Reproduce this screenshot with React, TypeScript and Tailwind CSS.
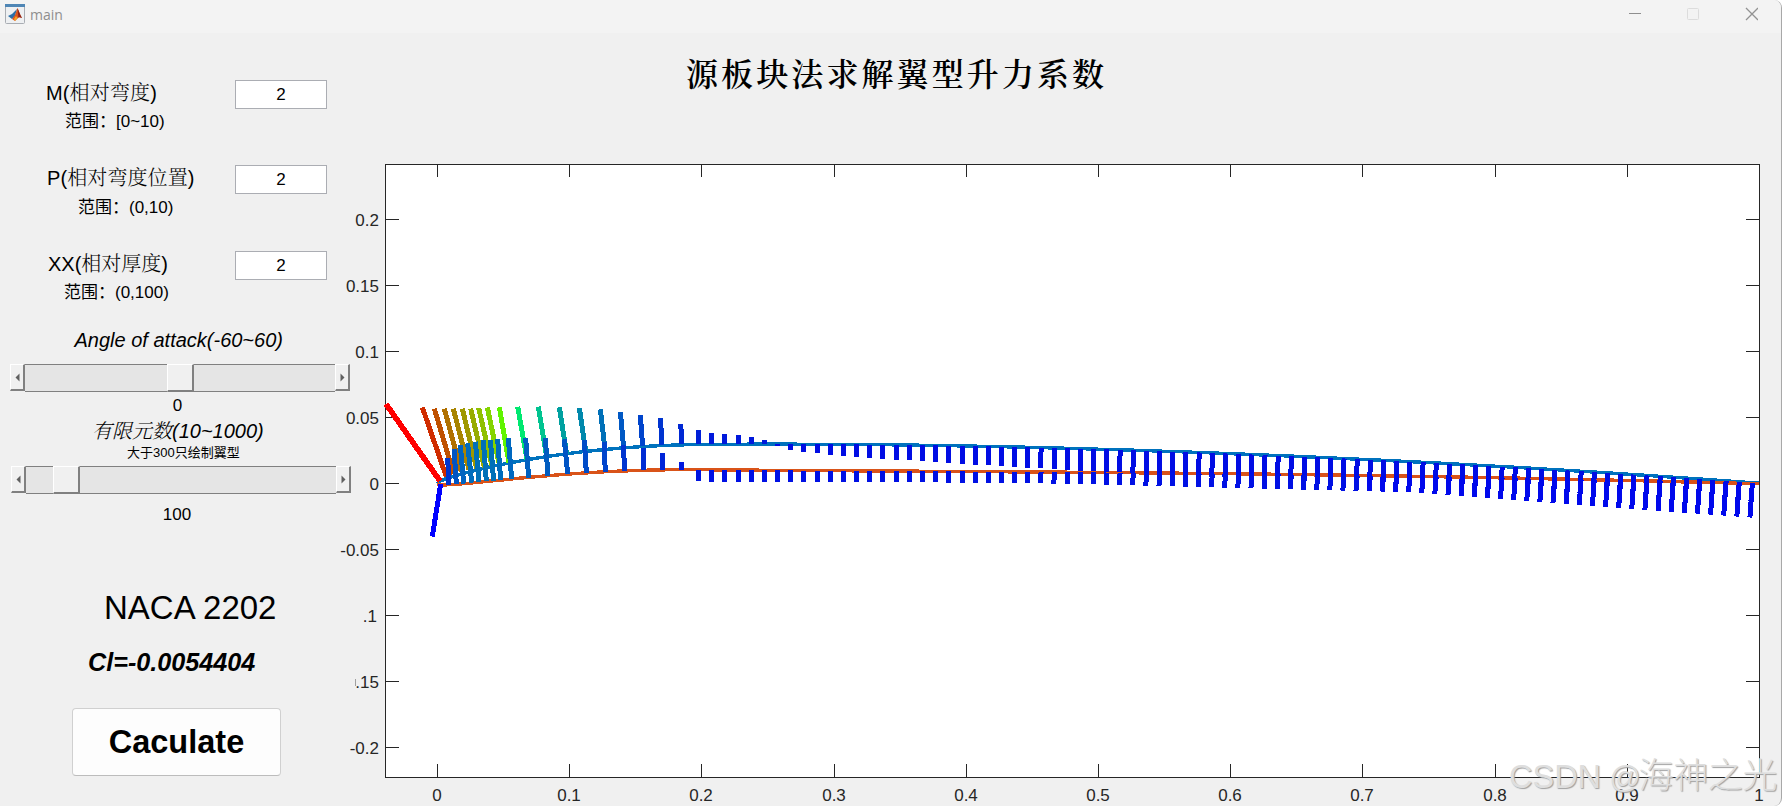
import React from "react";

const SANS = "font-['Liberation_Sans','Noto_Sans_CJK_SC',sans-serif]";

type Bar = [number, number, number, number, string];

// Leading-edge panels, in thirds of a pixel from (375, 380): tip x, tip y, base x, base y, colour.
const upperNose: Bar[] = [
  [142, 82, 214, 290, "#d02c00"],
  [178, 86, 236, 282, "#bf5000"],
  [208, 86, 259, 276, "#b07000"],
  [235, 86, 282, 270, "#a88400"],
  [262, 86, 305, 266, "#a09800"],
  [287, 86, 328, 262, "#98ac00"],
  [311, 84, 351, 258, "#90c000"],
  [337, 82, 373, 254, "#84d400"],
  [373, 82, 402, 248, "#60f400"],
  [428, 80, 456, 238, "#00e870"],
  [490, 80, 515, 230, "#00c490"],
  [553, 82, 575, 222, "#00a0a0"],
  [613, 84, 632, 213, "#0088ac"],
  [676, 88, 690, 208, "#0070b8"],
  [736, 96, 746, 203, "#0058c4"],
  [796, 106, 803, 199, "#0044cc"],
  [857, 115, 860, 196, "#0034d0"],
  [917, 132, 921, 193, "#0028d4"],
  [970, 150, 970, 193, "#0020d8"],
];

const lowerNose: Bar[] = [
  [218, 235, 222, 315, "#0034d0"],
  [237, 208, 244, 311, "#0054c4"],
  [256, 196, 266, 311, "#0064c0"],
  [278, 190, 290, 308, "#006cbc"],
  [301, 185, 312, 305, "#0070b8"],
  [325, 181, 334, 303, "#0070b8"],
  [346, 180, 356, 302, "#0070b8"],
  [368, 178, 377, 300, "#006cbc"],
  [400, 175, 410, 297, "#0068c0"],
  [452, 175, 461, 293, "#0060c0"],
  [511, 175, 519, 288, "#005cc0"],
  [568, 178, 578, 282, "#0054c4"],
  [628, 181, 634, 278, "#004cc8"],
  [687, 186, 691, 276, "#0044cc"],
  [745, 196, 749, 273, "#0034d0"],
  [805, 205, 806, 270, "#002cd4"],
  [862, 219, 862, 270, "#0024d8"],
  [919, 246, 919, 270, "#0018e0"],
  [970, 302, 970, 270, "#0014e0"],
];

const nose = (b: Bar): Bar => [375 + b[0] / 3, 380 + b[1] / 3, 375 + b[2] / 3, 380 + b[3] / 3, b[4]];

const X0 = 437.3;
const Y0 = 483.5;
const SX = 1322;
const SY = 1320;

function surface(x: number, side: 1 | -1) {
  const m = 0.02;
  const p = 0.2;
  const t = 0.02;
  const yt = 5 * t * (0.2969 * Math.sqrt(x) - 0.126 * x - 0.3516 * x * x + 0.2843 * x ** 3 - 0.1015 * x ** 4);
  const yc = x < p ? (m / (p * p)) * (2 * p * x - x * x) : (m / (1 - p) ** 2) * (1 - 2 * p + 2 * p * x - x * x);
  return yc + side * yt;
}

function outline(side: 1 | -1) {
  const pts: string[] = [];
  for (let i = 0; i <= 100; i++) {
    const x = (i / 100) ** 1.5;
    pts.push(`${(X0 + SX * x).toFixed(1)},${(Y0 - SY * surface(x, side)).toFixed(1)}`);
  }
  return pts.join(" ");
}

const upperTips = [
  433, 434, 435, 437, 440, 445.5, 450, 452, 453, 455, 456, 457, 458, 459, 460, 460, 461, 462, 463, 464, 465, 465, 466, 467,
  468, 468, 469, 470,
];

const tail = Array.from({ length: 80 }, (_, k) => {
  const i = k + 1;
  const x = 698.5 + i * 13.175;
  const u = (x - X0) / SX;
  const yu = Y0 - SY * surface(u, 1);
  const yl = Y0 - SY * surface(u, -1);
  const upTip = k < upperTips.length ? upperTips[k] : 470 + ((i - 28) / 52) * 31;
  let lowTip = 482;
  if (i > 14) lowTip = 482 + ((i - 14) / 14) * 1.7;
  if (i > 28) lowTip = 483.7 + ((i - 28) / 26) * 8.6;
  if (i > 54) lowTip = 492.3 + ((i - 54) / 26) * 25.2;
  const lean = i > 20 ? ((i - 20) / 60) * 1.6 : 0;
  return { x, yu, yl, upTip, lowTip, lean };
});

const xTicks = ["0", "0.1", "0.2", "0.3", "0.4", "0.5", "0.6", "0.7", "0.8", "0.9", "1"];
const yTicks: [string, number][] = [
  ["0.2", 219],
  ["0.15", 285],
  ["0.1", 351],
  ["0.05", 417],
  ["0", 483],
  ["-0.05", 549],
  [".1", 615],
  [".15", 681],
  ["-0.2", 747],
];

function Line({ b, width = 5 }: { b: Bar; width?: number }) {
  return <line x1={b[0]} y1={b[1]} x2={b[2]} y2={b[3]} stroke={b[4]} strokeWidth={width} />;
}

function Plot() {
  return (
    <svg
      className="block h-[646px] w-[1430px] overflow-visible font-['Liberation_Sans',sans-serif]"
      viewBox="352 160 1430 646"
      shapeRendering="crispEdges"
    >
      <rect x={385.5} y={164.5} width={1374} height={613} fill="#fff" stroke="#262626" />
      {xTicks.map((t, i) => {
        const x = Math.floor(437.5 + i * 132.2) + 0.5;
        return (
          <g key={t}>
            <path d={`M${x} 165v12M${x} 777v-13`} stroke="#262626" />
            <text x={x - 0.5} y={801} textAnchor="middle" fontSize={17} fill="#262626">
              {t}
            </text>
          </g>
        );
      })}
      {yTicks.map(([t, y]) => (
        <g key={t}>
          <path d={`M385 ${y + 0.5}h14M1759 ${y + 0.5}h-13`} stroke="#262626" />
          <text x={t === ".1" ? 377 : 379} y={y + 7} textAnchor="end" fontSize={17} fill="#262626">
            {t}
          </text>
        </g>
      ))}
      <path d="M355.5 679v7" stroke="#a0a0a0" />
      <polyline points={outline(1)} fill="none" stroke="#0072bd" strokeWidth={3.4} />
      <polyline points={outline(-1)} fill="none" stroke="#d95319" strokeWidth={3.4} />
      <Line b={[386, 404, 440, 481, "#ff0000"]} width={5.6} />
      {upperNose.map((b, i) => (
        <Line key={i} b={nose(b)} />
      ))}
      {tail.map((t, i) => (
        <Line key={i} b={[t.x, t.yu, t.x - t.lean, t.upTip, i < 5 ? "#0018dc" : "#000ce4"]} />
      ))}
      <Line b={[440.7, 484, 432.3, 536.5, "#0000ff"]} />
      {lowerNose.map((b, i) => (
        <Line key={i} b={nose(b)} />
      ))}
      {tail.map((t, i) => (
        <Line key={i} b={[t.x - t.lean * 0.1, t.yl, t.x - t.lean * 1.6, t.lowTip, i < 50 ? "#0010e4" : "#0008ec"]} />
      ))}
    </svg>
  );
}

function Field({ label, range, labelPad, rangePad }: { label: string; range: string; labelPad: string; rangePad: string }) {
  return (
    <div className="h-[85px]">
      <div className="flex h-[29px] items-start">
        <div
          className={`w-[235px] font-['Liberation_Sans','Noto_Serif_CJK_SC','Noto_Sans_CJK_SC',serif] text-[20px] leading-[26px] font-light whitespace-nowrap ${labelPad}`}
        >
          {label}
        </div>
        <div className="flex h-[29px] w-[92px] items-center justify-center border border-[#abadb3] bg-white text-[17px]">2</div>
      </div>
      <div className={`mt-[2px] text-[17px] leading-[21px] whitespace-nowrap ${rangePad}`}>{range}</div>
    </div>
  );
}

function Arrow({ right }: { right?: boolean }) {
  return (
    <div className="flex h-[27px] w-[15px] items-center justify-center border-t border-r-2 border-b-2 border-l border-t-white border-r-[#808080] border-b-[#808080] border-l-white bg-[#f0f0f0]">
      <svg className="h-[9px] w-[5px]" viewBox="0 0 5 9">
        <path d={right ? "M0.5 0.5l4 4-4 4z" : "M4.5 0.5l-4 4 4 4z"} fill="#606060" />
      </svg>
    </div>
  );
}

function Slider({ lead }: { lead: string }) {
  return (
    <div className="flex h-[28px] w-[340px]">
      <Arrow />
      <div className="flex flex-1 border-t border-b border-[#808080] bg-[#e5e5e5]">
        <div className={lead} />
        <div className="-mt-px -mb-px h-[28px] w-[27px] border-t border-r-2 border-b-2 border-l border-t-white border-r-[#808080] border-b-[#808080] border-l-white bg-[#f0f0f0]" />
      </div>
      <Arrow right />
    </div>
  );
}

function TitleBar() {
  return (
    <div className="flex h-[33px] items-center bg-[#f3f3f3] pb-[5px]">
      <svg className="ml-[5px] h-[20px] w-[20px]" viewBox="0 0 20 20">
        <rect x="0.5" y="0.5" width="19" height="19" rx="1" fill="#eef0f2" stroke="#a9adb3" />
        <rect x="0" y="0" width="20" height="3" fill="#4f86b5" />
        <path d="M3 12l4-2 5-5-2 7-3 3z" fill="#2c6fa8" />
        <path d="M7 15l3-4 2.5-7c1.5 3 2.5 7 4.5 10-2-1-3-1-5 1l-2 2z" fill="#d9541e" />
        <path d="M12.5 4c1.5 3 2.5 7 4.5 10-2-1-3-.8-3.6-.5z" fill="#8c2318" />
        <path d="M9 15l2-3 1.5 2-2.5 3z" fill="#f5a623" />
      </svg>
      <span className="mt-[2px] ml-[5px] flex-1 font-['Open_Sans',sans-serif] text-[14px] leading-[20px] text-[#8e8e8e]">main</span>
      <svg className="h-[14px] w-[130px]" viewBox="0 0 130 14">
        <path d="M1 6.5h12" stroke="#8e8e8e" />
        <rect x="59.5" y="1.5" width="11" height="11" rx="1" fill="none" stroke="#dcdcdc" />
        <path d="M118 1l12 12M130 1l-12 12" stroke="#929292" strokeWidth="1.3" />
      </svg>
      <div className="w-[23px]" />
    </div>
  );
}

export default function App() {
  return (
    <div className={`relative h-[806px] w-[1782px] overflow-hidden rounded-r-lg border-r border-[#a8a8a8] bg-[#f0f0f0] text-black ${SANS}`}>
      <TitleBar />
      <div className="flex">
        <div className="w-[352px] shrink-0 pt-[47px]">
          <Field label="M(相对弯度)" range="范围：[0~10)" labelPad="pl-[46px] tracking-[0.15px]" rangePad="pl-[65px]" />
          <Field label="P(相对弯度位置)" range="范围：(0,10)" labelPad="pl-[47px] tracking-[0.1px]" rangePad="pl-[78px] pt-[1px]" />
          <div className="h-px" />
          <Field label="XX(相对厚度)" range="范围：(0,100)" labelPad="pl-[48px]" rangePad="pl-[64px]" />
          <div className="-mt-[7px] pl-[74.5px] text-[20px] leading-[22px] italic">Angle of attack(-60~60)</div>
          <div className="mt-[13px] pl-[10px]">
            <Slider lead="w-[142px]" />
          </div>
          <div className="mt-[4px] pl-[3px] text-center text-[17px] leading-[20px]">0</div>
          <div className="mt-[4px] pl-[92px] font-['Liberation_Sans','Noto_Serif_CJK_SC','Noto_Sans_CJK_SC',serif] text-[20px] leading-[22px] font-light italic">
            有限元数(10~1000)
          </div>
          <div className="mt-[3px] pl-[127px] text-[13px] leading-[16px]">大于300只绘制翼型</div>
          <div className="mt-[5px] pl-[11px]">
            <Slider lead="w-[27px]" />
          </div>
          <div className="mt-[11px] pl-[2px] text-center text-[17px] leading-[20px]">100</div>
          <div className="mt-[63px] pl-[104px] text-[33px] leading-[40px]">NACA 2202</div>
          <div className="mt-[19px] pl-[88px] text-[25.2px] leading-[30px] font-bold italic">Cl=-0.0054404</div>
          <button className="mt-[31px] ml-[72px] flex h-[68px] w-[209px] items-center justify-center rounded-[4px] border border-[#d0d0d0] border-b-[#bcbcbc] bg-[#fdfdfd] text-[32.5px] font-bold">
            Caculate
          </button>
        </div>
        <div className="w-[1430px] shrink-0">
          <div className="h-[127px] pt-[19px] pl-[334px] font-['Noto_Serif_CJK_SC','Noto_Sans_CJK_SC',serif] text-[32px] leading-[40px] font-semibold tracking-[3.1px] whitespace-nowrap">
            源板块法求解翼型升力系数
          </div>
          <Plot />
        </div>
      </div>
      <div className="absolute top-[751px] left-[1509px] text-[32.5px] leading-[50px] font-light whitespace-nowrap text-[#dedede] [text-shadow:1px_1px_1px_#a0a0a0]">
        CSDN <span className="-ml-px text-[31px]">@</span>
        <span className="-ml-[2px] text-[35px] tracking-[-0.4px]">海神之光</span>
      </div>
    </div>
  );
}
